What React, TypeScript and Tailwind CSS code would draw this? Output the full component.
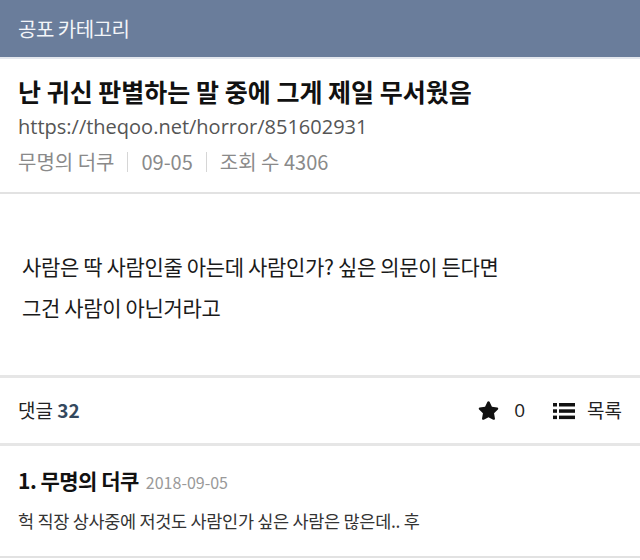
import { FaStar } from "react-icons/fa"

const font = { fontFamily: '"Noto Sans CJK KR", "Noto Sans", sans-serif' }

function ListIcon() {
  return (
    <svg width="22" height="18" viewBox="0 0 22 18" className="text-[#111]">
      <rect x="0" y="1" width="4" height="3.5" fill="currentColor" />
      <rect x="6" y="1" width="16" height="3.5" fill="currentColor" />
      <rect x="0" y="7.3" width="4" height="3.5" fill="currentColor" />
      <rect x="6" y="7.3" width="16" height="3.5" fill="currentColor" />
      <rect x="0" y="13.6" width="4" height="3.5" fill="currentColor" />
      <rect x="6" y="13.6" width="16" height="3.5" fill="currentColor" />
    </svg>
  )
}

export default function App() {
  return (
    <div className="w-[640px] h-[560px] bg-white overflow-hidden" style={font}>
      <div className="h-[59px] bg-[#6a7d9b] px-[18px] flex items-center border-b-2 border-[#e4e8ee]">
        <span className="text-[20px] text-[#f3f5f8] tracking-[-0.5px]">공포 카테고리</span>
      </div>

      <div className="px-[18px] pt-[14px] pb-[13px] border-b-2 border-[#e2e2e2]">
        <h1 className="text-[25px] leading-[36px] font-bold text-[#111]">
          난 귀신 판별하는 말 중에 그게 제일 무서웠음
        </h1>
        <div className="text-[20px] leading-[36px] text-[#555]" style={{ fontFamily: '"Open Sans", "Noto Sans", sans-serif' }}>
          https://theqoo.net/horror/851602931
        </div>
        <div className="flex items-center text-[20px] leading-[34px] text-[#8a8a8a]">
          <span>무명의 더쿠</span>
          <span className="mx-[13px] h-[20px] w-px bg-[#d6d6d6]" />
          <span>09-05</span>
          <span className="mx-[13px] h-[20px] w-px bg-[#d6d6d6]" />
          <span>조회 수 4306</span>
        </div>
      </div>

      <div className="h-[184px] px-[22px] pt-[52px] border-b-[3px] border-[#e6e6e6]">
        <p className="text-[21px] leading-[41px] text-[#1a1a1a] tracking-[-0.35px]">
          사람은 딱 사람인줄 아는데 사람인가? 싶은 의문이 든다면
          <br />
          그건 사람이 아닌거라고
        </p>
      </div>

      <div className="h-[68px] px-[18px] flex items-center justify-between border-b-[3px] border-[#e6e6e6]">
        <div className="text-[19px] text-[#222]">
          댓글 <span className="font-semibold text-[#34495e]">32</span>
        </div>
        <div className="flex items-center text-[19px] text-[#222]">
          <FaStar className="w-[21px] h-[21px] text-[#111]" />
          <span className="ml-[15px]" style={{ fontFamily: '"Open Sans", sans-serif' }}>0</span>
          <span className="ml-[28px]"><ListIcon /></span>
          <span className="ml-[12px]">목록</span>
        </div>
      </div>

      <div className="px-[18px] pt-[16px] border-b-2 border-[#e2e2e2] h-[112px]">
        <div className="flex items-baseline leading-[36px]">
          <span className="text-[21px] font-bold text-[#111] tracking-[-0.5px]">1. 무명의 더쿠</span>
          <span className="ml-[7px] text-[16px] text-[#999]">2018-09-05</span>
        </div>
        <div className="text-[17.5px] leading-[42px] text-[#333] tracking-[-0.3px]">
          헉 직장 상사중에 저것도 사람인가 싶은 사람은 많은데.. 후
        </div>
      </div>
    </div>
  )
}
